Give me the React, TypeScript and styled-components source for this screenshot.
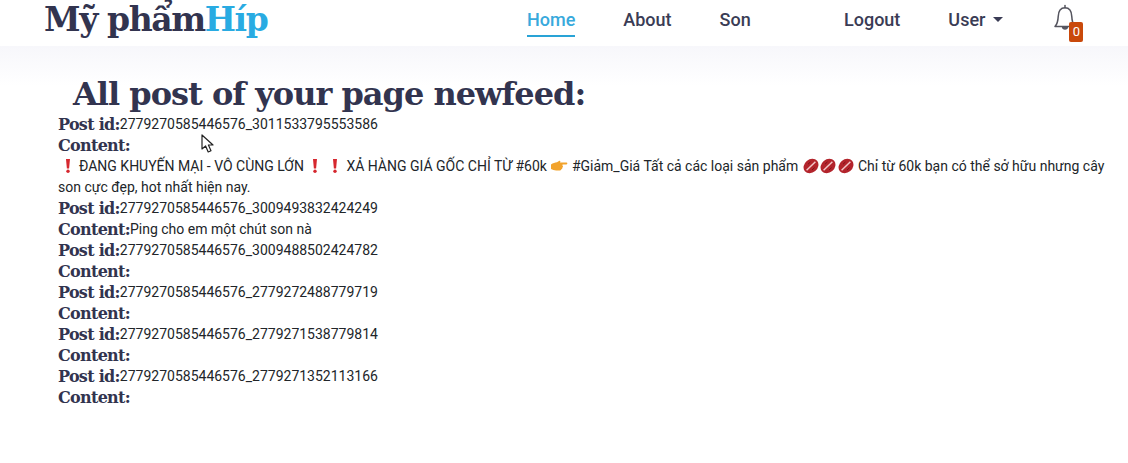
import React from 'react'
import styled, { createGlobalStyle } from 'styled-components'

const posts = [
  { id: '2779270585446576_3011533795553586', content: 'promo' },
  { id: '2779270585446576_3009493832424249', content: 'Ping cho em một chút son nà' },
  { id: '2779270585446576_3009488502424782', content: '' },
  { id: '2779270585446576_2779272488779719', content: '' },
  { id: '2779270585446576_2779271538779814', content: '' },
  { id: '2779270585446576_2779271352113166', content: '' },
]

const Exclaim = () => (
  <ExclaimIcon viewBox="0 0 14 16" width={14} height={16}>
    <path d="M5 1h4L8.100 10.400H5.900z" fill="#d6282f" />
    <circle cx="7" cy="13.200" r="1.700" fill="#d6282f" />
  </ExclaimIcon>
)

const Hand = () => (
  <Emoji viewBox="0 0 18 16" width={18} height={16}>
    <path
      d="M1 6.500C3 5 5 4.600 7 4.200L9 3c1-.5 2 .6 1 1.500h6.400c1.300 0 1.300 1.900 0 1.900H12.500v1.400c.8.6.6 1.500-.2 1.700.3.900-.2 1.500-.9 1.600.1.900-.6 1.300-1.400 1.300H6.200c-2 0-3.600-.7-5.200-1.400z"
      fill="#f2a32c"
    />
  </Emoji>
)

const Kiss = () => (
  <KissIcon viewBox="0 0 16 16" width={16} height={16}>
    <ellipse cx="8" cy="8" rx="8" ry="6.600" transform="rotate(-40 8 8)" fill="#b3242c" />
    <path d="M3.600 12.200 12.400 3.800" stroke="#f3c6c8" strokeWidth="1.500" />
    <path d="M5 6.200 7.400 4M9 12l2.600-2.400" stroke="#7d1219" strokeWidth="1" />
  </KissIcon>
)

const App: React.FC = () => {
  return (
    <>
      <GlobalStyle />
      <Header>
        <Logo>
          Mỹ phẩm<LogoAccent>Híp</LogoAccent>
        </Logo>
        <Nav>
          <NavLink active>Home</NavLink>
          <NavLink>About</NavLink>
          <NavLink>Son</NavLink>
        </Nav>
        <UserNav>
          <NavLink>Logout</NavLink>
          <NavLink>
            User<Caret />
          </NavLink>
          <BellBox>
            <svg width="24" height="28" viewBox="0 0 24 28" fill="none" stroke="#55555f" strokeWidth="1.500">
              <path d="M12 1.600v2.200" strokeLinecap="round" />
              <path d="M2 22.600c2.600-3 3-5.200 3.200-10C5.400 7 8 3.800 12 3.800s6.600 3.200 6.800 8.800c.2 4.800.6 7 3.200 10z" strokeLinejoin="round" />
              <path d="M9.600 23c.3 2.600 4.500 2.600 4.800 0" fill="#55555f" />
            </svg>
            <Badge>0</Badge>
          </BellBox>
        </UserNav>
      </Header>
      <Main>
        <Title>All post of your page newfeed:</Title>
        {posts.map(post => (
          <div key={post.id}>
            <Row>
              <Label>Post id:</Label>
              <Value>{post.id}</Value>
            </Row>
            <Row>
              <Label>Content:</Label>
              {post.content !== 'promo' && <Value>{post.content}</Value>}
            </Row>
            {post.content === 'promo' && (
              <Promo>
                <Exclaim /> ĐANG KHUYẾN MẠI - VÔ CÙNG LỚN <Exclaim /> <Exclaim /> XẢ HÀNG GIÁ GỐC CHỈ TỪ #60k <Hand />{' '}
                #Giảm_Giá Tất cả các loại sản phẩm <Kiss />
                <Kiss />
                <Kiss /> Chỉ từ 60k bạn có thể sở hữu nhưng cây son cực đẹp, hot nhất hiện nay.
              </Promo>
            )}
          </div>
        ))}
      </Main>
      <Cursor viewBox="0 0 16 20" width={16} height={20}>
        <path d="M1 1v14l3.600-3 2.600 6 2.800-1.200-2.600-5.800H12z" fill="#fff" stroke="#222" strokeWidth="1.200" strokeLinejoin="round" />
      </Cursor>
    </>
  )
}

export default App

const GlobalStyle = createGlobalStyle`
  html, body {
    margin: 0;
    background: #fff;
    font-family: Roboto, "Noto Sans", sans-serif;
    font-size: 14px;
    color: #212529;
  }
`

const Header = styled.header`
  display: flex;
  align-items: flex-start;
  height: 46px;
  padding-left: 44px;
  background: #fff;
`

const Logo = styled.div`
  width: 459px;
  font-family: "DejaVu Serif", serif;
  font-size: 33px;
  font-weight: 700;
  letter-spacing: -1.400px;
  line-height: 40px;
  color: #32344f;
  white-space: nowrap;
`

const LogoAccent = styled.span`
  color: #29abe2;
`

const Nav = styled.nav`
  display: flex;
  width: 317px;
  padding-top: 4px;
`

const UserNav = styled.nav`
  display: flex;
  align-items: flex-start;
  padding-top: 4px;
`

const NavLink = styled.a<{ active?: boolean }>`
  display: flex;
  align-items: center;
  height: 31px;
  margin: 0 24px;
  padding-bottom: 0;
  border-bottom: 2px solid ${props => (props.active ? '#29a3d6' : 'transparent')};
  font-size: 18px;
  font-weight: 500;
  color: ${props => (props.active ? '#38a9dc' : '#3a3c55')};
`

const Caret = styled.span`
  margin-left: 8px;
  border-top: 5px solid #3a3c55;
  border-left: 5px solid transparent;
  border-right: 5px solid transparent;
`

const BellBox = styled.div`
  position: relative;
  width: 30px;
  height: 40px;
  margin-left: 26px;
`

const Badge = styled.span`
  position: absolute;
  left: 16px;
  top: 18px;
  width: 14px;
  height: 20px;
  border-radius: 2px;
  background: #c9490b;
  color: #fff;
  font-size: 13px;
  line-height: 20px;
  text-align: center;
`

const Main = styled.main`
  height: 417px;
  box-sizing: border-box;
  padding: 0 10px 0 58px;
  background: linear-gradient(#f7f7fb 0, #fff 40px);
`

const Title = styled.h1`
  margin: 0;
  padding: 26px 0 0 15px;
  height: 42px;
  font-family: "DejaVu Serif", serif;
  font-size: 32px;
  font-weight: 700;
  letter-spacing: -1px;
  line-height: 44px;
  color: #32344f;
  white-space: nowrap;
`

const Row = styled.div`
  height: 21px;
  line-height: 21px;
  font-size: 14px;
  white-space: nowrap;
`

const Label = styled.b`
  font-family: "DejaVu Serif", serif;
  font-size: 16px;
  font-weight: 700;
  letter-spacing: -0.700px;
  color: #32344f;
`

const Value = styled.span`
  vertical-align: 1px;
`

const Promo = styled.div`
  line-height: 21px;
  font-size: 14px;
`

const Emoji = styled.svg`
  vertical-align: -3px;
`

const ExclaimIcon = styled(Emoji)`
  margin: 0 1px;
  &:first-child {
    margin-left: 2.500px;
  }
`

const KissIcon = styled(Emoji)`
  margin: 0 0.800px;
`

const Cursor = styled.svg`
  position: absolute;
  left: 201px;
  top: 134px;
`
